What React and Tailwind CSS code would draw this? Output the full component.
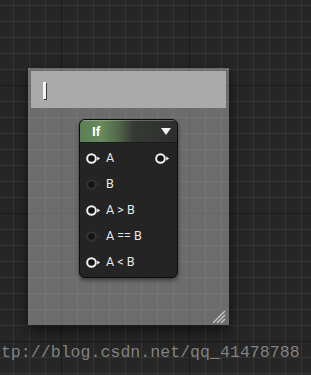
import React from "react";

const pins = [
  { label: "A", on: true, out: true },
  { label: "B", on: false },
  { label: "A > B", on: true },
  { label: "A == B", on: false },
  { label: "A < B", on: true },
];

function Pin({ on }) {
  return (
    <svg width="15" height="11" viewBox="0 0 15 11" className="shrink-0">
      <circle cx="5.5" cy="5.5" r="4.3" fill="#141414" stroke={on ? "#f2f2f2" : "#333333"} strokeWidth="2" />
      <polygon points="11.2,3.5 14.2,5.5 11.2,7.5" fill={on ? "#f2f2f2" : "#333333"} />
    </svg>
  );
}

export default function App() {
  return (
    <div
      className="relative w-[311px] h-[375px] overflow-hidden bg-[#262626] pl-[28px] pt-[68px] bg-[linear-gradient(to_right,#1b1b1b_1px,transparent_1px),linear-gradient(to_bottom,#1b1b1b_1px,transparent_1px),linear-gradient(to_right,#353535_1px,transparent_1px),linear-gradient(to_bottom,#353535_1px,transparent_1px)] bg-[length:128px_128px,128px_128px,16px_16px,16px_16px] bg-[position:61px_85px,61px_85px,13px_5px,13px_5px]"
      style={{ fontFamily: "Roboto, 'Noto Sans', sans-serif" }}
    >
      {/* comment box */}
      <div className="flex flex-col w-[201px] h-[257px] p-[3px] pb-0 bg-[rgba(215,215,215,0.4)] shadow-[0_6px_12px_rgba(0,0,0,0.55)]">
        <div className="h-[37px] bg-[#aaaaaa] pl-[12px] pt-[11px]">
          <div className="w-[3px] h-[17px] bg-[#f4f4f4] shadow-[1px_1px_0_#3a3a3a]" />
        </div>

        {/* If node */}
        <div className="ml-[48px] mt-[11px] w-[99px] h-[159px] rounded-[6px] border border-[#0c0c0c] bg-[#232423] shadow-[0_2px_4px_rgba(0,0,0,0.5)] overflow-hidden">
          <div className="flex items-center justify-between h-[23px] pl-[12px] pr-[6px] bg-[linear-gradient(to_right,#5c7f54_0%,#688a5e_22%,#50664a_40%,#363935_55%,#2d2e2d_100%)] border-b border-[#1a1a1a] shadow-[inset_0_1px_0_rgba(255,255,255,0.25)]">
            <span className="text-[13px] font-bold text-white leading-none">If</span>
            <svg width="10" height="7" viewBox="0 0 10 7">
              <polygon points="0,0 10,0 5,7" fill="#f0f0f0" />
            </svg>
          </div>
          <div className="flex flex-col pt-[2px]">
            {pins.map((p) => (
              <div key={p.label} className="flex items-center h-[26px] pl-[6px] pr-[7px]">
                <Pin on={p.on} />
                <span className="ml-[5px] text-[12.5px] text-[#e8e8e8] leading-none">{p.label}</span>
                {p.out && (
                  <span className="ml-auto">
                    <Pin on />
                  </span>
                )}
              </div>
            ))}
          </div>
        </div>

        {/* resize grip */}
        <svg width="14" height="14" viewBox="0 0 14 14" className="mt-auto self-end mb-[1px]">
          <line x1="13" y1="1" x2="1" y2="13" stroke="#c8c8c8" strokeWidth="1.2" />
          <line x1="13" y1="5" x2="5" y2="13" stroke="#c8c8c8" strokeWidth="1.2" />
          <line x1="13" y1="9" x2="9" y2="13" stroke="#c8c8c8" strokeWidth="1.2" />
        </svg>
      </div>

      {/* watermark, cut at the left edge as in the screenshot */}
      <div
        className="absolute left-[-19px] top-[345px] text-[16.6px] leading-none text-[#8e8e8e]/90 whitespace-nowrap"
        style={{ fontFamily: "'Liberation Mono', monospace" }}
      >
        http://blog.csdn.net/qq_41478788
      </div>
    </div>
  );
}
